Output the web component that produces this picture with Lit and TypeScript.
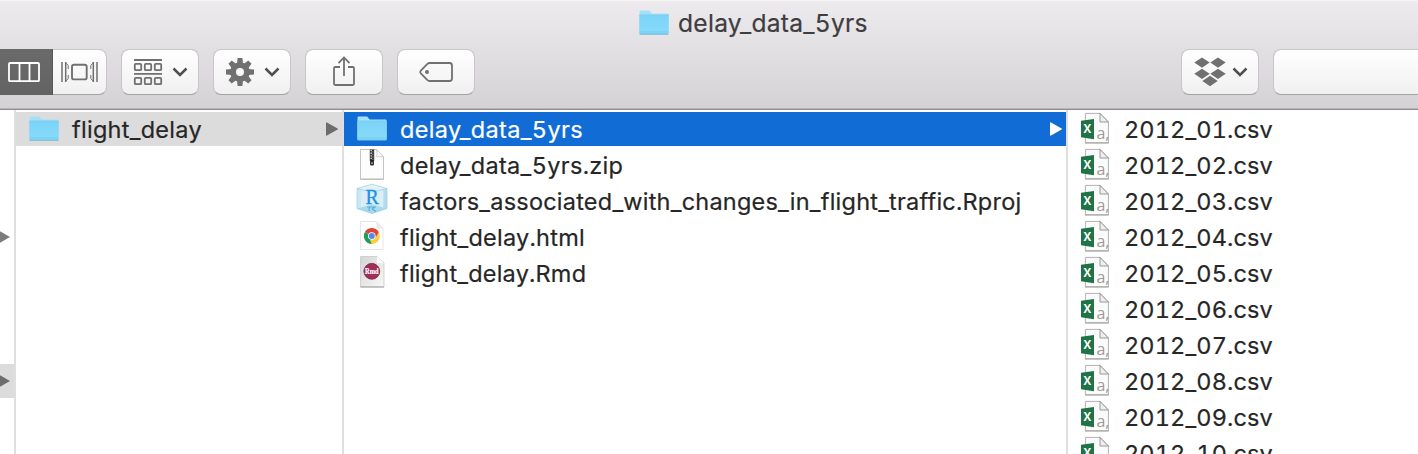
import { LitElement, html, css, svg, nothing } from "lit";
import { customElement, property } from "lit/decorators.js";

type Kind = "folder" | "zip" | "rproj" | "chrome" | "rmd" | "csv";

const folder = svg`
  <path d="M1.5 26.6V4.6Q1.5 3.4 2.7 3.4H10.6Q11.5 3.4 12 4.3L12.9 5.8Q13.3 6.5 14.2 6.5H29.6Q30.6 6.5 30.6 7.5V26.6Z" fill="#a4e1f9"/>
  <path d="M1.3 8.2H30.7V26Q30.7 27.2 29.6 27.2H2.4Q1.3 27.2 1.3 26Z" fill="url(#fg)"/>
  <path d="M1.3 8H30.7" stroke="#6cc5ea" stroke-width=".7"/>
  <path d="M1.3 25H30.7" stroke="#69c6ec" stroke-width=".6"/>
  <path d="M1.6 27.2H30.4" stroke="#59a9cb" stroke-width=".8"/>
  <defs><linearGradient id="fg" x1="0" y1="0" x2="0" y2="1"><stop offset="0" stop-color="#7bd4f8"/><stop offset="1" stop-color="#88dafa"/></linearGradient></defs>`;

const page = (bottom: number, fill: string, stroke: string) => svg`
  <path d="M4.5 .5H20.5L27.5 8V${bottom}H4.5Z" fill=${fill} stroke=${stroke} stroke-width=".8"/>
  <path d="M4.5 ${bottom}H27.5" stroke="#aaa" stroke-width=".8"/>
  <path d="M20.5 .5Q21.5 5 20.6 7.8Q24.5 7 27.5 8Z" fill="#fff" stroke="#b9b9b9" stroke-width=".6"/>`;

const icons: Record<Kind, unknown> = {
  folder,
  zip: svg`${page(30.2, "#fdfdfd", "#b5b5b5")}
    <path d="M16 .5V12" stroke="#333" stroke-width="4.4"/>
    <path d="M15.2 1V11" stroke="#ddd" stroke-width="1.3" stroke-dasharray="1.3 1.3"/>
    <path d="M16.9 2.3V12" stroke="#999" stroke-width="1" stroke-dasharray="1.3 1.3"/>
    <rect x="14.1" y="11" width="3.8" height="5.6" rx="1" fill="#222"/>
    <path d="M16 13.2V15.2" stroke="#eee" stroke-width="1"/>`,
  rproj: svg`
    <path d="M1 3.6L16 -.8L31 3.6V23.5L16 28.6L1 23.5Z" fill="#cce7f3"/>
    <path d="M1 3.6L16 -.8L31 3.6L16 7Z" fill="#e3f3f8"/>
    <path d="M5 6L16 3L27 6V23L16 20L5 23Z" fill="#d9eef7"/>
    <path d="M1 23.5L16 19.5L31 23.5L16 28.6Z" fill="#a8d9ee"/>
    <path d="M27.5 5V24.5L31 23.5V3.6Z" fill="#b5dcec"/>
    <path d="M1 3.6L16 -.8L31 3.6V23.5L16 28.6L1 23.5ZM1 3.6L16 7L31 3.6" fill="none" stroke="#8ec9df" stroke-width=".6"/>
    <text x="16.2" y="18.8" text-anchor="middle" font-family="Liberation Serif, serif" font-size="20" fill="#2490dc" stroke="#2490dc" stroke-width=".3">R</text>
    <path d="M11 22H20M13.2 22V26M16 24L19 22M16 24L20 26.5" stroke="#58ade0" stroke-width="1.2" fill="none"/>`,
  chrome: svg`
    <path d="M4.5 .5H20.5L27 7V28.5H4.5Z" fill="#fff" stroke="#ddd" stroke-width=".7"/>
    <path d="M20 .5Q21 5 20.3 7.3L27 8Z" fill="#e9e9e9"/>
    <path d="M15.8 15L8.9 11A8 8 0 0 1 22.7 11Z" fill="#df4537"/>
    <path d="M15.8 15L22.7 11A8 8 0 0 1 15.8 23Z" fill="#fdcf40"/>
    <path d="M15.8 15L15.8 23A8 8 0 0 1 8.9 11Z" fill="#249c58"/>
    <path d="M15.8 11H22.7L20 16Z" fill="#df4537"/>
    <path d="M19.3 17L15.8 23L14 19Z" fill="#fdcf40"/>
    <circle cx="15.8" cy="15" r="3.8" fill="#fff"/>
    <circle cx="15.8" cy="15" r="3" fill="#4c8bf5"/>`,
  rmd: svg`
    <path d="M4.5 -.5H21L28 6V30H4.5Z" fill="url(#rg)" stroke="#c4c4c4" stroke-width=".7"/>
    <path d="M4.5 30H28" stroke="#999" stroke-width=".9"/>
    <path d="M21 -.5Q21 4 21.2 5.8L28 6.4Z" fill="#fff"/>
    <circle cx="15.8" cy="14.3" r="7.9" fill="#a42c5b" stroke="#70303f" stroke-width=".9"/>
    <text x="15.8" y="17.4" text-anchor="middle" textLength="13.5" lengthAdjust="spacingAndGlyphs" font-family="Liberation Serif, serif" font-weight="700" font-size="8.6" fill="#fff" stroke="#fff" stroke-width=".2">Rmd</text>
    <defs><linearGradient id="rg" x1="0" y1="0" x2="1" y2="1"><stop offset="0" stop-color="#d5d5d5"/><stop offset="1" stop-color="#f8f8f8"/></linearGradient></defs>`,
  csv: svg`
    <path d="M5.4 .4H20L28.4 9V29.8H5.4Z" fill="#fbfbfb" stroke="#a9a9a9" stroke-width=".9"/>
    <path d="M5 30H28.8" stroke="#979797" stroke-width=".8"/>
    <path d="M20 .4V9H28.4Z" fill="#eee" stroke="#8f8f8f" stroke-width=".9"/>
    <text x="16.4" y="26.3" font-family="Open Sans, sans-serif" font-size="16" fill="#9c9c9c">a,</text>
    <path d="M1 7.8L14 6V26.2L1 24.2Z" fill="#207347"/>
    <text x="7.3" y="20" text-anchor="middle" font-family="Open Sans, sans-serif" font-weight="700" font-size="11.5" fill="#fff">X</text>`,
};

interface Item {
  name: string;
  kind: Kind;
  spacing: number;
  arrow?: boolean;
  state?: "open" | "selected";
}

@customElement("finder-row")
class FinderRow extends LitElement {
  @property({ attribute: false }) item!: Item;
  static styles = css`
    :host { display: block; height: 34px; }
    .row { display: flex; align-items: center; height: 34px; box-sizing: border-box; padding: 0 4px 0 12px; color: #262626; }
    .open { background: #dcdcdc; }
    .selected { background: #116cd6; color: #fff; }
    .icon { width: 32px; height: 32px; flex: none; overflow: visible; margin-right: 12px; }
    .name { flex: 1; white-space: pre; line-height: 34px; padding-top: 2px; -webkit-text-stroke: 0.2px currentColor; }
    .arrow { width: 12px; height: 14px; flex: none; fill: #6d6d6d; }
    .selected .arrow { fill: #fff; }
  `;
  render() {
    const { name, kind, arrow, state, spacing } = this.item;
    return html`<div class="row ${state ?? ""}">
      <svg class="icon" viewBox="0 0 32 32">${icons[kind]}</svg>
      <span class="name" style="letter-spacing:${spacing}px">${name}</span>
      ${arrow ? html`<svg class="arrow" viewBox="0 0 12 14"><path d="M0 1Q0 0 1 .4L11.6 6.4Q12.3 7 11.6 7.6L1 13.6Q0 14 0 13Z"/></svg>` : nothing}
    </div>`;
  }
}

const projects: Item[] = [{ name: "flight_delay", kind: "folder", spacing: 0.27, arrow: true, state: "open" }];
const files: Item[] = [
  { name: "delay_data_5yrs", kind: "folder", spacing: 0.35, arrow: true, state: "selected" },
  { name: "delay_data_5yrs.zip", kind: "zip", spacing: 0.33 },
  { name: "factors_associated_with_changes_in_flight_traffic.Rproj", kind: "rproj", spacing: 0.22 },
  { name: "flight_delay.html", kind: "chrome", spacing: 0.24 },
  { name: "flight_delay.Rmd", kind: "rmd", spacing: 0.2 },
];
const tables: Item[] = Array.from({ length: 10 }, (_, i) => ({
  name: `2012_${String(i + 1).padStart(2, "0")}.csv`,
  kind: "csv" as Kind,
  spacing: 0.13,
}));

const chevron = html`<svg class="chev" viewBox="0 0 16 10"><path d="M1.5 1.5L8 8L14.5 1.5" fill="none" stroke="#4e4e4e" stroke-width="2.5"/></svg>`;

const squares = [64.8, 78.8].map((y) => [134.8, 144.8, 154.8].map((x) =>
  svg`<rect x=${x - 134} y=${y - 60} width="6.4" height="6.4" rx="1"/>`));

@customElement("app-root")
class AppRoot extends LitElement {
  static styles = css`
    :host { display: flex; flex-direction: column; height: 454px; overflow: hidden; background: #fff; font: 23.5px Inter, sans-serif; font-feature-settings: "calt" 0, "tnum" 1; }
    .head { flex: none; height: 110px; box-sizing: border-box; border-bottom: 1px solid #8e8c8f; background: linear-gradient(#edebee, #d4d2d5); box-shadow: inset 0 -1px #b7b5b8, inset 0 1px #f6f5f6; }
    .title { display: flex; align-items: center; height: 46px; padding-left: 638px; color: #403d41; }
    .title svg { width: 32px; height: 32px; margin-right: 8px; }
    .title span { font-size: 24.6px; letter-spacing: 0.26px; white-space: pre; -webkit-text-stroke: 0.2px currentColor; }
    .tools { display: flex; gap: 14px; padding-top: 3px; }
    .btn { display: flex; align-items: center; justify-content: center; box-sizing: border-box; width: 78px; height: 46px; border: 1px solid #c8c6c9; border-bottom-color: #a5a3a6; border-radius: 8px; background: linear-gradient(#fff, #f0f0f0); background-clip: padding-box; flex: none; }
    .btn svg { flex: none; overflow: visible; }
    .btn .lead { margin: 0 10px 0 1px; }
    .btn .box { margin: 0 6px 0 1px; }
    .chev { width: 16px; height: 10px; }
    .views { display: flex; width: 107px; height: 46px; flex: none; }
    .active { display: flex; align-items: center; width: 53px; background: linear-gradient(#6b6a6b, #646364); box-shadow: inset -1px 0 #585758; }
    .flow { width: 54px; border-left: 0; border-radius: 0 8px 8px 0; }
    .space { width: 678px; flex: none; }
    .field { width: 160px; }
    .cols { display: flex; flex: 1; min-height: 0; }
    .col { display: flex; flex-direction: column; gap: 2px; box-sizing: border-box; padding-top: 2px; border-right: 2px solid #dfdfdf; flex: none; overflow: hidden; }
    .stub { width: 16px; }
    .c2 { width: 328px; }
    .c3 { width: 724px; }
    .c4 { width: 350px; border: 0; }
    .tick { display: flex; align-items: center; justify-content: flex-end; height: 34px; padding-right: 4px; flex: none; }
    .tick svg { width: 12px; height: 14px; flex: none; fill: #7c7c7c; }
    .tick.on { background: #dcdcdc; }
    .tick.on svg { fill: #6d6d6d; }
    finder-row { flex: none; }
  `;
  rows(items: Item[]) {
    return items.map((i) => html`<finder-row .item=${i}></finder-row>`);
  }
  render() {
    return html`
      <div class="head">
        <div class="title"><svg viewBox="0 0 32 32">${folder}</svg><span>delay_data_5yrs</span></div>
        <div class="tools">
          <div class="views">
            <div class="active"><svg width="53" height="46" fill="none" stroke="#fff" stroke-width="1.8"><rect x="9" y="14" width="30" height="18.2" rx="1"/><path d="M19.5 14V32M29.5 14V32"/></svg></div>
            <div class="btn flow"><svg width="37" height="20" viewBox="0 0 37 20" fill="none" stroke="#707070" stroke-width="1.5"><path d="M1 0V20M36 0V20M4.7 0V20M32.3 0V20"/><path d="M5 1L7.2 3.5V7M5 19L7.2 16.5V13M32 1L29.8 3.5V7M32 19L29.8 16.5V13" stroke-width="1"/><rect x="11" y="2.8" width="14.7" height="14.6" rx="2" stroke-width="1.9"/></svg></div>
          </div>
          <div class="btn"><svg class="lead" width="28" height="26" viewBox="0 0 28 26" fill="none" stroke="#707070" stroke-width="1.8"><path d="M0 1H28M0 14.8H28"/>${squares}</svg>${chevron}</div>
          <div class="btn"><svg class="lead" width="28" height="28" viewBox="-14 -14 28 28" fill="#707070">
            ${[0, 45, 90, 135].map((a) => svg`<path d="M-2.4 -14H2.4L3 -8V8L2.4 14H-2.4L-3 8V-8Z" transform="rotate(${a})"/>`)}
            <circle r="9.8"/><circle r="4" fill="#fafafa"/></svg>${chevron}</div>
          <div class="btn"><svg width="22" height="30" viewBox="0 0 22 30" fill="none" stroke="#707070" stroke-width="1.8"><path d="M7 10H2.2Q1 10 1 11.2V26.8Q1 28 2.2 28H19.8Q21 28 21 26.8V11.2Q21 10 19.8 10H15M11 19V.5M5.5 6.2L11 .5L16.5 6.2"/></svg></div>
          <div class="btn"><svg width="34" height="20" viewBox="0 0 34 20" fill="none" stroke="#707070" stroke-width="1.8"><path d="M10.5 1H30.5Q33 1 33 3.5V16.5Q33 19 30.5 19H10.5Q9.3 19 8.4 18L1.8 11.3Q.6 10 1.8 8.7L8.4 2Q9.3 1 10.5 1Z"/><circle cx="8" cy="10" r="2" fill="#707070" stroke="none"/></svg></div>
          <div class="space"></div>
          <div class="btn"><svg class="box" width="32" height="30" viewBox="0 0 32 30" fill="#707070"><path d="M8 .5L15.7 5.6L8 10.7L.3 5.6ZM24 .5L31.7 5.6L24 10.7L16.3 5.6ZM8 11.7L15.7 16.8L8 21.9L.3 16.8ZM24 11.7L31.7 16.8L24 21.9L16.3 16.8ZM16 18.8L23.7 24L16 29.2L8.3 24Z"/></svg>${chevron}</div>
          <div class="btn field"></div>
        </div>
      </div>
      <div class="cols">
        <div class="col stub">${Array.from({ length: 9 }, (_, i) => html`<div class="tick ${i === 7 ? "on" : ""}">${i === 3 || i === 7 ? html`<svg viewBox="0 0 12 14"><path d="M0 0L12 7L0 14Z"/></svg>` : nothing}</div>`)}</div>
        <div class="col c2">${this.rows(projects)}</div>
        <div class="col c3">${this.rows(files)}</div>
        <div class="col c4">${this.rows(tables)}</div>
      </div>`;
  }
}
